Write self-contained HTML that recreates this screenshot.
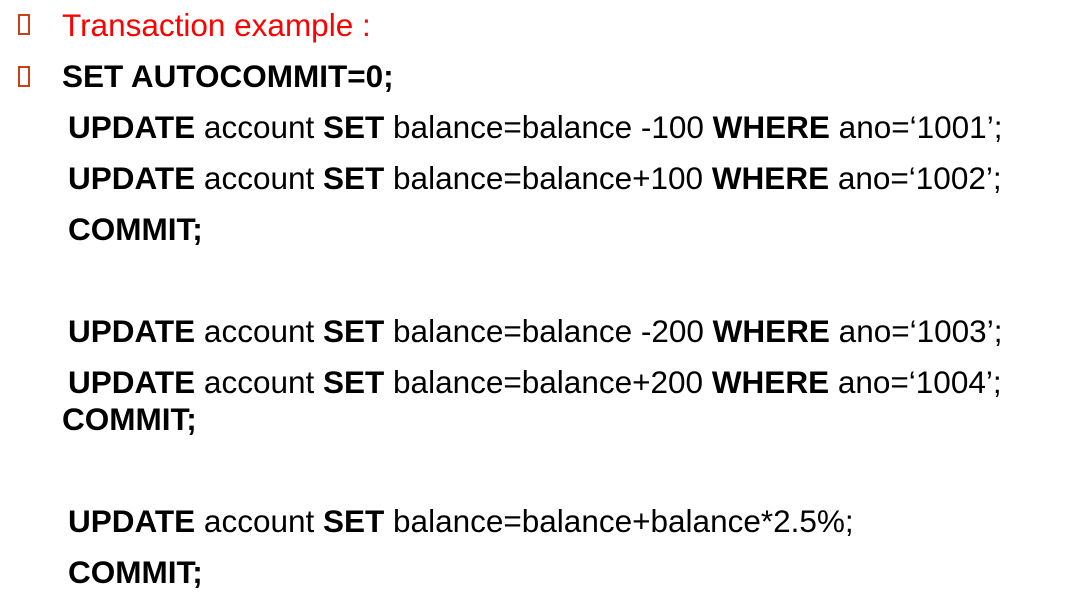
<!DOCTYPE html>
<html><head><meta charset="utf-8"><style>
body{margin:0;width:1089px;height:609px;background:#fff;overflow:hidden;position:relative;font-family:"Liberation Sans",Arial,sans-serif;font-size:31.5px;color:#000}
.l{position:absolute;line-height:29px;white-space:pre}
.b{font-weight:bold}
.box{position:absolute;left:18px;width:8px;height:17px;border:2px solid #c8401a}
</style></head><body>
<div class="box" style="top:14px"></div>
<div class="box" style="top:66px"></div>
<div class="l" style="left:62px;top:11px;color:#f00">Transaction example :</div>
<div class="l b" style="left:62px;top:62px">SET AUTOCOMMIT=0;</div>
<div class="l" style="left:68px;top:113px"><b>UPDATE</b> account <b>SET</b> balance=balance -100 <b>WHERE</b> ano=‘1001’;</div>
<div class="l" style="left:68px;top:164px"><b>UPDATE</b> account <b>SET</b> balance=balance+100 <b>WHERE</b> ano=‘1002’;</div>
<div class="l b" style="left:68px;top:215px">COMMIT;</div>
<div class="l" style="left:68px;top:317px"><b>UPDATE</b> account <b>SET</b> balance=balance -200 <b>WHERE</b> ano=‘1003’;</div>
<div class="l" style="left:68px;top:368px"><b>UPDATE</b> account <b>SET</b> balance=balance+200 <b>WHERE</b> ano=‘1004’;</div>
<div class="l b" style="left:62px;top:405px">COMMIT;</div>
<div class="l" style="left:68px;top:507px"><b>UPDATE</b> account <b>SET</b> balance=balance+balance*2.5%;</div>
<div class="l b" style="left:68px;top:558px">COMMIT;</div>
</body></html>
